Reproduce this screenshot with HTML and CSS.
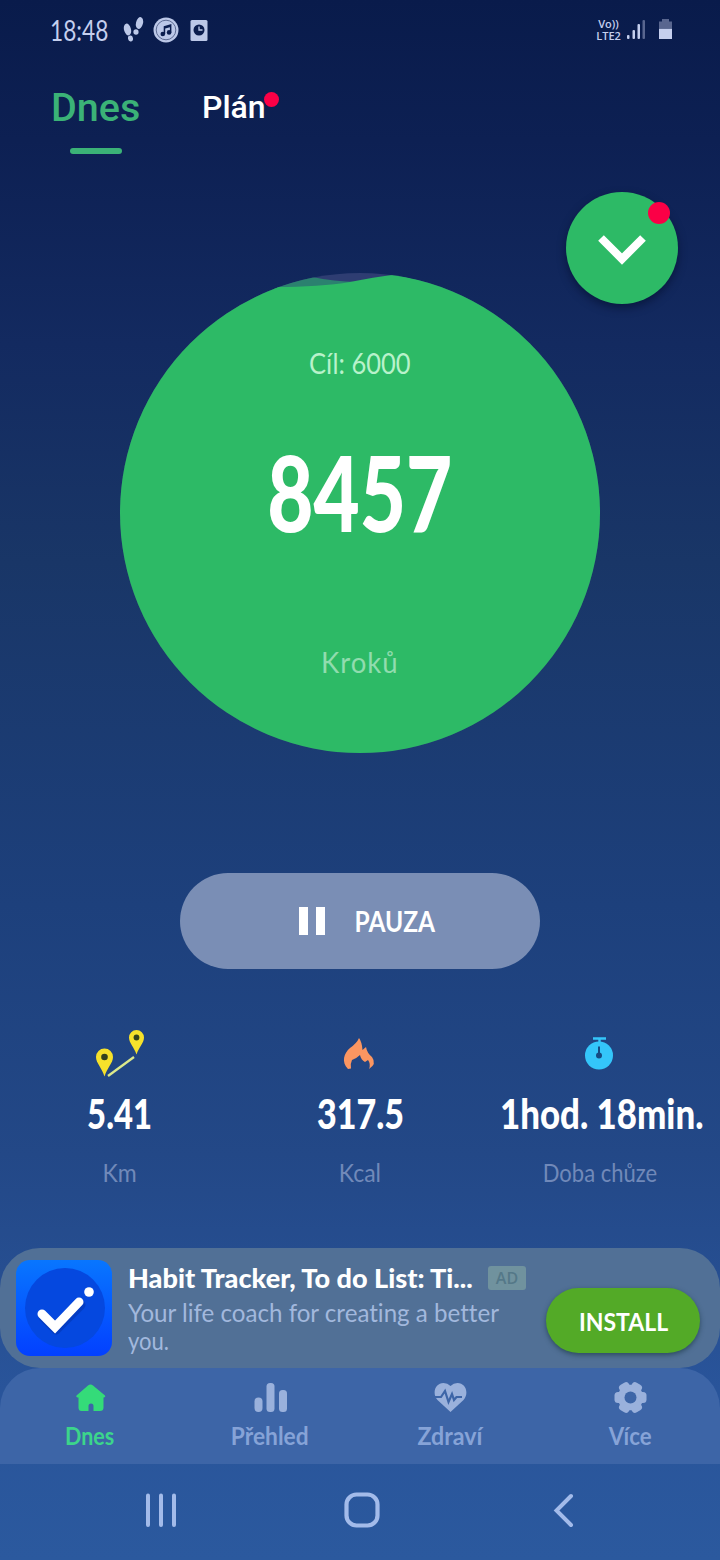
FILE: index.html
```html
<!DOCTYPE html>
<html lang="cs">
<head>
<meta charset="utf-8">
<title>Krokoměr</title>
<link rel="stylesheet" href="styles.css">
</head>
<body>
<div class="screen">
  <header class="status">
    <span class="clock"><span class="hand">18:48</span></span>
    <svg class="notif" width="86" height="28" viewBox="0 0 86 28">
      <g fill="#bcc8e8">
        <ellipse cx="4.500" cy="13.500" rx="3.500" ry="6" transform="rotate(-14 4.5 13.5)"/>
        <ellipse cx="7.500" cy="22.500" rx="2.500" ry="3" transform="rotate(-12 7.5 22.5)"/>
        <ellipse cx="16.500" cy="7" rx="3.500" ry="6" transform="rotate(14 16.5 7)"/>
        <ellipse cx="13" cy="16" rx="2.600" ry="2.800"/>
        <circle cx="43" cy="14" r="12.500"/>
        <rect x="67.500" y="4" width="17" height="21" rx="1.500"/>
      </g>
      <circle cx="43" cy="14" r="9.800" fill="none" stroke="#5d6b93" stroke-width="1"/>
      <g fill="#0b1d4e"><circle cx="39.800" cy="18" r="2.300"/><circle cx="46.100" cy="16.400" r="2.300"/><path d="M40.700 10.200 48.400 8v8.500h-1.500v-5.200l-4.700 1.300V18h-1.500z"/><circle cx="76" cy="14" r="5.500"/></g>
      <path d="M76 10.500V14h3.500" fill="none" stroke="#bcc8e8" stroke-width="1.300"/>
    </svg>
    <div class="lte"><span>Vo))</span><span>LTE2</span></div>
    <svg class="signal" width="48" height="22" viewBox="0 0 48 22">
      <g fill="#c5cfee"><rect x="0" y="16" width="2.500" height="4" rx="1"/><rect x="5.500" y="11" width="2.500" height="9" rx="1"/><rect x="10.500" y="5" width="2.500" height="15" rx="1"/><rect x="32" y="9.500" width="13" height="10.500"/></g>
      <g fill="#59668f"><rect x="15.500" y="1" width="2.500" height="19" rx="1"/><path d="M32 9.500V2.500h3V0h7v2.500h3v7z"/></g>
    </svg>
  </header>

  <nav class="tabs">
    <div class="tab tab-on">Dnes<i class="underline"></i></div>
    <div class="tab">Plán<i class="dot"></i></div>
  </nav>

  <main class="stage">
    <button class="fab">
      <svg width="48" height="32" viewBox="0 0 48 32"><path d="M3 4 24 25 45 4" fill="none" stroke="#fff" stroke-width="8"/></svg>
      <i class="fab-dot"></i>
    </button>
    <section class="ring">
      <svg class="wave" width="480" height="480" viewBox="0 0 480 480">
        <defs><clipPath id="disc"><circle cx="240" cy="240" r="240"/></clipPath></defs>
        <g clip-path="url(#disc)">
          <rect width="480" height="480" fill="#2e3d72"/>
          <path d="M140 0H180L192 4Q214 8.500 237 9L190 16H140z" fill="#2b816f"/>
          <path d="M0 14H155Q200 14 230 9Q255 4 272 2Q280 2 290 5L480 40V480H0z" fill="#2dba66"/>
        </g>
      </svg>
      <div class="ring-text">
        <span class="goal"><span class="hand">Cíl: 6000</span></span>
        <span class="steps"><span class="hand">8457</span></span>
        <span class="unit"><span class="hand">Kroků</span></span>
      </div>
    </section>
    <button class="pause"><i class="bars"></i><span class="hand">PAUZA</span></button>
  </main>

  <section class="stats">
    <div class="stat">
      <svg width="50" height="50" viewBox="0 0 50 50">
        <path d="M13 47 39 28" stroke="#dce98b" stroke-width="2.300"/>
        <path d="M9.500 47.500C7 39 1 34 1 28a8.500 8.500 0 0 1 17 0c0 6-6 11-8.500 19.500zM41.500 25.500C39 18 34 14 34 8.500a7.500 7.500 0 0 1 15 0c0 5.500-5 9.500-7.500 17z" fill="#f6e12b"/>
        <circle cx="9.500" cy="28" r="3.300" fill="#33421f"/><circle cx="41.500" cy="8.500" r="2.900" fill="#33421f"/>
      </svg>
      <b><span class="hand km">5.41</span></b><span class="label"><span class="hand wide">Km</span></span>
    </div>
    <div class="stat">
      <svg width="50" height="50" viewBox="0 0 50 50">
        <path d="M13 40C6 33 9 24 15 19Q22 14 24 9Q27 13 27.500 21L31 18Q32 24 37 28Q42 35 34 40Q36 35 33 31L30 33Q26 31 25 26Q22 29 17 31Q15 35 16 39.500z" fill="#fb9661"/>
      </svg>
      <b><span class="hand kcal">317.5</span></b><span class="label"><span class="hand wide">Kcal</span></span>
    </div>
    <div class="stat">
      <svg width="50" height="50" viewBox="0 0 50 50">
        <path d="M18 9.500H31M24.500 9v5" stroke="#34c6fa" stroke-width="2.400"/><circle cx="24" cy="26.500" r="14" fill="#34c6fa"/>
        <path d="M24 17.500v9" stroke="#164b83" stroke-width="2"/><circle cx="24" cy="26.500" r="3" fill="#164b83"/>
      </svg>
      <b><span class="hand time">1hod. 18min.</span></b><span class="label"><span class="hand walk">Doba chůze</span></span>
    </div>
  </section>

  <aside class="ad">
    <svg class="ad-icon" width="96" height="96" viewBox="0 0 96 96">
      <defs><linearGradient id="blue" x2="0" y2="1"><stop stop-color="#0876ff"/><stop offset="1" stop-color="#0340ff"/></linearGradient></defs>
      <rect width="96" height="96" rx="14" fill="url(#blue)"/>
      <circle cx="49" cy="48" r="40" fill="#0548df"/>
      <path d="M26 54 39 67 64 42" fill="none" stroke="#0336b0" stroke-width="9" stroke-linecap="round" stroke-linejoin="round" opacity=".6" transform="translate(1 3)"/>
      <path d="M26 54 39 67 63 42" fill="none" stroke="#fff" stroke-width="9" stroke-linecap="round" stroke-linejoin="miter"/>
      <circle cx="73" cy="32" r="4.800" fill="#fff"/>
    </svg>
    <div class="ad-body">
      <div class="ad-head"><div class="ad-title"><span class="hand">Habit Tracker, To do List: Ti...</span></div><span class="ad-tag">AD</span></div>
      <div class="ad-copy"><span class="hand first">Your life coach for creating a better</span><br><span class="hand second">you.</span></div>
    </div>
    <button class="install"><span class="hand">INSTALL</span></button>
  </aside>

  <nav class="bottom">
    <a class="item item-on"><svg width="34" height="32" viewBox="0 0 34 32"><path d="M15 3.500Q17.500 1.500 20 3.500L32 13.500Q33 15 31 15.500H30.500V25.500Q30.500 29 27 29H20.500V24Q20.500 21.500 18 21.500T15.500 24V29H8.500Q5.500 29 5.500 25.500V15.500H4.500Q2.500 15 3.500 13.500z"/></svg><span class="hand">Dnes</span></a>
    <a class="item"><svg width="34" height="32" viewBox="0 0 34 32"><rect x="1.500" y="15.500" width="8" height="14.500" rx="4"/><rect x="13.500" y="1" width="8" height="29" rx="3.500"/><rect x="26" y="8" width="8" height="22" rx="3.500"/></svg><span class="hand overview">Přehled</span></a>
    <a class="item"><svg width="34" height="32" viewBox="0 0 34 32"><path d="M17.500 30 4.500 18C-1.500 11 2.500 1 10.500 1Q14.500 1 17.500 4Q20.500 1 24.500 1C32.500 1 36.500 11 30.500 18z"/><path d="M1 15H8L12 9 15.500 20 19 12 21 18 23.500 15H29" fill="none" stroke="#3d65a7" stroke-width="2.200"/></svg><span class="hand health">Zdraví</span></a>
    <a class="item"><svg width="34" height="32" viewBox="0 0 34 32"><circle cx="17.500" cy="15.500" r="12.800"/><rect id="tooth" x="1.500" y="10" width="32" height="11" rx="3.500"/><use href="#tooth" transform="rotate(60 17.5 15.5)"/><use href="#tooth" transform="rotate(120 17.5 15.5)"/><circle cx="17.500" cy="15.500" r="6" fill="#3d65a7"/></svg><span class="hand more">Více</span></a>
  </nav>
  <footer class="system">
    <svg width="720" height="96" viewBox="0 0 720 96" fill="none" stroke="#a3bbea" stroke-linecap="round">
      <path d="M148 31.500V61M161 31.500V61M174 31.500V61" stroke-width="4"/>
      <rect x="346.500" y="30.500" width="31" height="31" rx="10" stroke-width="4.200"/>
      <path d="M571 32 556.500 46.500 571 61" stroke-width="4"/>
    </svg>
  </footer>
</div>
</body>
</html>
```
FILE: styles.css
```css
* { box-sizing: border-box; }
body { margin: 0; font-family: Lato, "Open Sans", sans-serif; font-variant-ligatures: none; color: #fff; }
button { border: 0; padding: 0; font: inherit; color: inherit; }
.screen {
  width: 720px; height: 1560px; display: flex; flex-direction: column; overflow: hidden;
  background: linear-gradient(#091b4b 0, #0d2053 9%, #132a60 22%, #193667 36%, #1d407c 58%, #234887 74%, #29549a 89%, #2b599e 100%);
}
.hand { display: inline-block; white-space: nowrap; transform: scaleX(.86); }

.status { height: 60px; display: flex; align-items: center; padding-left: 50px; color: #c5cfee; }
.clock { width: 73px; font-size: 28px; }
.clock .hand { transform-origin: left; transform: scaleX(.81); }
.lte { display: flex; flex-direction: column; align-items: center; margin-left: 386px; width: 27px; font: 600 11px/12px "Open Sans", sans-serif; }
.lte span { height: 12px; }
.signal { margin-left: 5px; }

.tabs { height: 100px; display: flex; align-items: flex-start; padding: 22px 0 0 51px; gap: 61px; font-family: Roboto, sans-serif; font-weight: 500; }
.tab { position: relative; font-size: 32px; line-height: 50px; }
.tab-on { width: 90px; font-size: 39.500px; line-height: 52px; color: #3bb277; }
.underline { display: block; width: 52px; height: 6px; margin: 14px auto 0; border-radius: 3px; background: #3bb277; }
.dot { position: absolute; left: 62px; top: 10px; width: 15px; height: 15px; border-radius: 50%; background: #fb0046; }

.stage { position: relative; height: 868px; padding-top: 113px; display: flex; flex-direction: column; align-items: center; gap: 120px; }
.fab { position: absolute; right: 42px; top: 32px; width: 112px; height: 112px; border-radius: 50%; background: #2dba66; box-shadow: 0 4px 8px rgba(0, 10, 35, .5); display: flex; align-items: center; justify-content: center; }
.fab svg { margin-top: 4px; }
.fab-dot { position: absolute; right: 8px; top: 10px; width: 22px; height: 22px; border-radius: 50%; background: #fb0046; }
.ring { position: relative; width: 480px; height: 480px; }
.wave { position: absolute; left: 0; top: 0; }
.ring-text { position: relative; height: 100%; display: flex; flex-direction: column; align-items: center; padding-top: 70px; }
.goal { font-size: 28px; line-height: 40px; color: #b8f2cb; }
.goal .hand { transform: scaleX(.91); }
.steps { margin-top: 43px; font-size: 105px; line-height: 130px; font-weight: 900; }
.steps .hand { transform: scaleX(.76); }
.unit { margin-top: 86px; font-size: 29px; line-height: 40px; color: #91dcae; letter-spacing: 1px; }
.unit .hand { transform: scaleX(.95); }
.pause { width: 360px; height: 96px; border-radius: 48px; background: #7a8eb5; display: flex; align-items: center; font-size: 28.500px; font-weight: 700; }
.bars { width: 26px; height: 28px; margin: 0 23px 0 119px; border: solid #fff; border-width: 0 9px; }

.stats { height: 220px; padding-top: 1px; display: grid; grid-template-columns: repeat(3, 240px); }
.stat { display: flex; flex-direction: column; align-items: center; }
.stat b { font-size: 41px; line-height: 50px; margin-top: 10px; font-weight: 900; }
.km { transform: scaleX(.8); }
.kcal { transform: scaleX(.83); }
.time { transform: translateX(2px) scaleX(.85); }
.label { font-size: 25px; line-height: 32px; margin-top: 17px; color: #7189b9; }
.wide { transform: scaleX(.92); }
.walk { transform: scaleX(.88); }

.ad { height: 120px; border-radius: 40px; background: #517096; display: flex; align-items: flex-start; padding: 12px 20px 0 16px; }
.ad-body { width: 418px; padding-left: 16px; }
.ad-head { display: flex; align-items: center; height: 35px; gap: 14px; }
.ad-title { width: 346px; font-size: 27px; font-weight: 900; }
.ad-title .hand, .ad-copy .hand { transform-origin: left; }
.ad-title .hand { transform: scaleX(1.003); }
.ad-tag { width: 38px; height: 24px; border-radius: 3px; background: #70929e; color: #547888; text-align: center; font: 600 16px/25px "Open Sans", sans-serif; }
.ad-copy { font-size: 24.500px; line-height: 28px; margin-top: 4px; color: #a2b8dd; white-space: nowrap; }
.ad-copy .first { transform: scaleX(.985); }
.ad-copy .second { transform: scaleX(.9); }
.install { width: 154px; height: 65px; margin-top: 28px; margin-left: 16px; border-radius: 33px; background: #53aa27; font-size: 25px; font-weight: 700; box-shadow: 0 2px 5px rgba(20, 50, 60, .6); }
.install .hand { transform: scaleX(.92); }

.bottom { height: 96px; border-radius: 40px 40px 0 0; background: #3d65a7; display: grid; grid-template-columns: repeat(4, 180px); }
.item { display: flex; flex-direction: column; align-items: center; padding-top: 14px; color: #86a3d7; font-size: 25px; line-height: 32px; font-weight: 700; }
.item svg { fill: #9ab1dc; margin-bottom: 5px; }
.item-on { color: #3cd58b; }
.item-on svg { fill: #34db79; }
.overview { transform: scaleX(.91); }
.health { transform: scaleX(.93); }
.more { transform: scaleX(.89); }
.system { height: 96px; }
```
